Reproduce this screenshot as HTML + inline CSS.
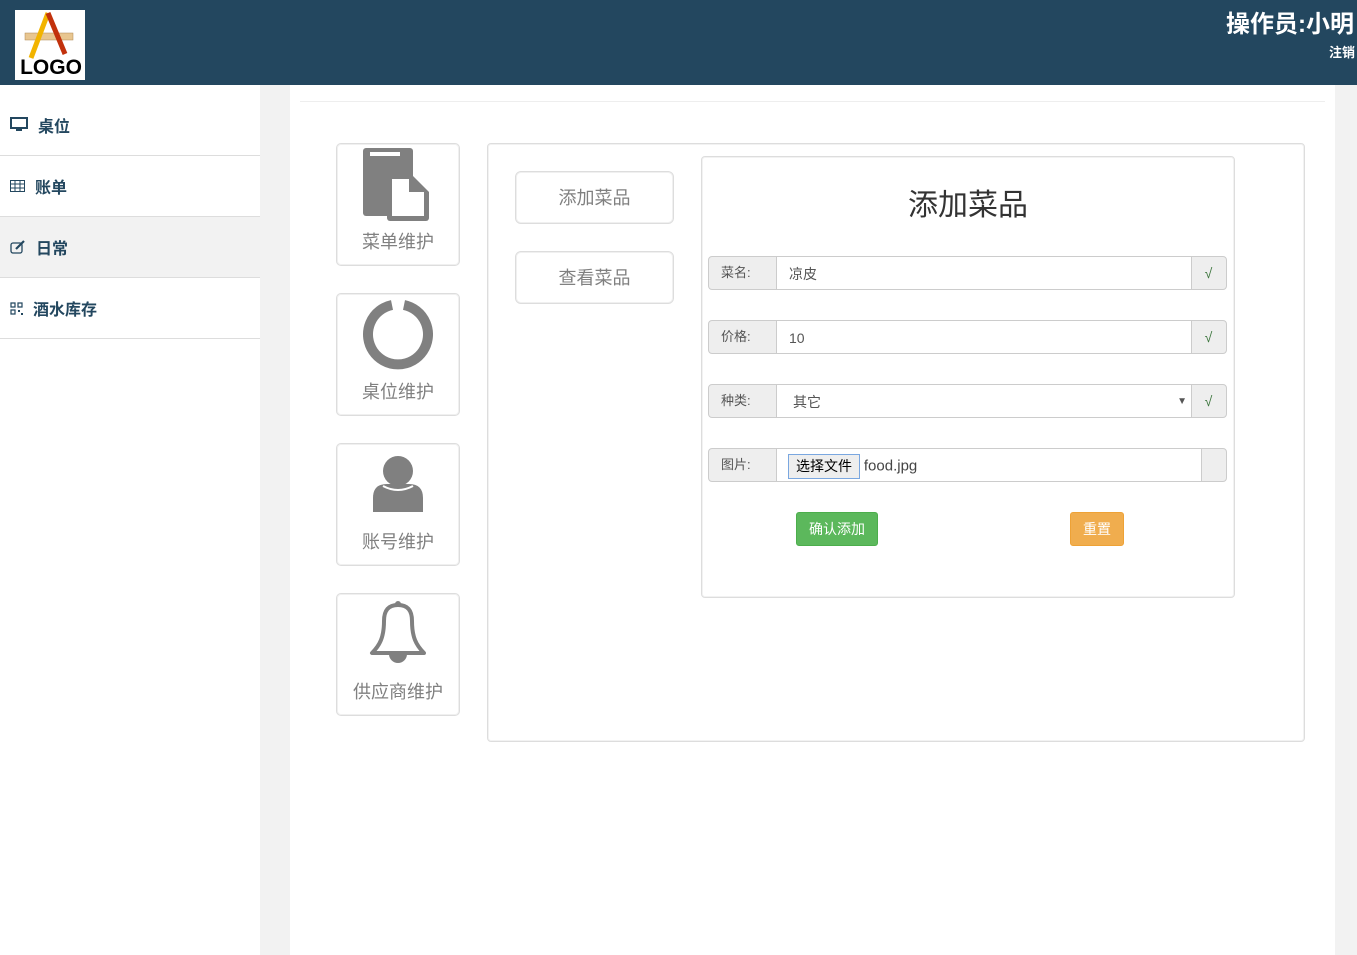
<!DOCTYPE html>
<html><head><meta charset="utf-8"><style>
*{margin:0;padding:0;box-sizing:border-box}
body{width:1357px;height:955px;overflow:hidden;background:#fff;font-family:"Liberation Sans","Noto Sans CJK SC",sans-serif;position:relative}
.hdr{position:absolute;left:0;top:0;width:1357px;height:85px;background:#23475f}
.logo{position:absolute;left:15px;top:10px;width:70px;height:70px;background:#fff}
.op{position:absolute;right:3px;top:4px;color:#fff;font-weight:bold;font-size:24px}
.lo{position:absolute;right:2px;top:42px;color:#fff;font-weight:bold;font-size:13px}
.side{position:absolute;left:0;top:85px;width:260px}
.it{height:61px;border-bottom:1px solid #ddd;display:flex;align-items:center;padding-left:10px;color:#23475f;font-size:16px;font-weight:bold}
.it svg{margin-right:10px}
.g1{position:absolute;left:260px;top:85px;width:30px;height:870px;background:#f2f2f2}
.g2{position:absolute;left:1335px;top:85px;width:22px;height:870px;background:#f2f2f2}
.hl{position:absolute;left:300px;top:101px;width:1025px;height:1px;background:#eee}
.tile{position:absolute;left:336px;width:124px;height:123px;border:1px solid #ddd;border-radius:5px;box-shadow:inset 0 0 0 1px #f0f0f0;text-align:center;color:#808080;font-size:18px}
.tile span{position:absolute;left:0;right:0;top:84px}
.tile svg{position:absolute;left:24px;top:2px}
.pan{position:absolute;border:1px solid #ddd;border-radius:4px;box-shadow:inset 0 0 0 1px #f2f2f2}
.btn{position:absolute;left:515px;width:159px;height:53px;border:1px solid #ddd;border-radius:6px;box-shadow:inset 0 0 0 1px #f0f0f0;color:#808080;font-size:18px;text-align:center;line-height:53px}
.row{position:absolute;left:708px;width:519px;height:34px;border:1px solid #ccc;border-radius:4px;background:#eee;font-size:13px;color:#555}
.row .l{position:absolute;left:0;top:0;width:67px;height:32px;line-height:32px;padding-left:12px}
.row .v{position:absolute;left:67px;top:0;width:416px;height:32px;background:#fff;border-left:1px solid #ccc;border-right:1px solid #ccc;line-height:34px;padding-left:12px;font-size:14px}
.row .c{position:absolute;right:0;top:0;width:35px;height:32px;line-height:32px;text-align:center;color:#3c763d;font-size:14px}
</style></head><body>
<div class="hdr">
<div class="logo"><svg width="70" height="70"><rect x="10" y="23" width="48" height="7" fill="#e8c690" stroke="#b08850" stroke-width="0.5"/><path d="M33 3 L16 48" stroke="#f2b400" stroke-width="5"/><path d="M33 3 L50 44" stroke="#c2310c" stroke-width="5"/><text x="36" y="64" text-anchor="middle" font-family="Liberation Sans" font-weight="bold" font-size="21" fill="#000">LOGO</text></svg></div>
<div class="op">操作员:小明</div><div class="lo">注销</div>
</div>
<div class="side">
<div class="it" style="height:71px;padding-top:9px"><svg width="18" height="15"><rect x="1" y="1" width="16" height="10" fill="none" stroke="#23475f" stroke-width="2"/><rect x="6" y="12" width="6" height="2" fill="#23475f"/></svg>桌位</div>
<div class="it"><svg width="15" height="12"><rect x="0.5" y="0.5" width="14" height="11" fill="none" stroke="#23475f"/><path d="M0 4H15M0 8H15M5 0V12M10 0V12" stroke="#23475f"/></svg>账单</div>
<div class="it" style="background:#f2f2f2"><svg width="16" height="14"><rect x="1" y="3" width="11" height="10" rx="2" fill="none" stroke="#23475f" stroke-width="1.3"/><path d="M6 9L14 1" stroke="#23475f" stroke-width="2.2"/></svg>日常</div>
<div class="it"><svg width="13" height="13"><path d="M1 1h4v4h-4zM8 1h4v4h-4zM1 8h4v4h-4z" fill="none" stroke="#23475f" stroke-width="1.2"/><rect x="8" y="8" width="2" height="2" fill="#23475f"/><rect x="11" y="11" width="2" height="2" fill="#23475f"/></svg>酒水库存</div>
</div>
<div class="g1"></div><div class="g2"></div><div class="hl"></div>
<div class="tile" style="top:143px"><svg width="72" height="76"><rect x="2" y="2" width="50" height="68" rx="3" fill="#808080"/><rect x="9" y="6" width="30" height="4" fill="#fff"/><path d="M26 28h24l18 18v26a3 3 0 0 1-3 3h-36a3 3 0 0 1-3-3z" fill="#808080"/><path d="M31 33h17v13h15v24h-32z" fill="#fff"/></svg><span>菜单维护</span></div>
<div class="tile" style="top:293px"><svg width="72" height="76"><path d="M31 9 A30 30 0 1 0 43 9" fill="none" stroke="#808080" stroke-width="10"/></svg><span>桌位维护</span></div>
<div class="tile" style="top:443px"><svg width="72" height="76"><circle cx="37" cy="25" r="15" fill="#808080"/><path d="M12 66 v-14 q0-14 14-14 h22 q14 0 14 14 v14 z" fill="#808080"/><path d="M22 40 q15 8 30 0" fill="none" stroke="#fff" stroke-width="2"/></svg><span>账号维护</span></div>
<div class="tile" style="top:593px"><svg width="72" height="76"><circle cx="37" cy="8" r="3" fill="#808080"/><path d="M37 9 c-10 0-14 6-14 16 c0 16-4 24-12 32 h52 c-8-8-12-16-12-32 c0-10-4-16-14-16z" fill="none" stroke="#808080" stroke-width="4" stroke-linejoin="round"/><path d="M28 58 a9 9 0 0 0 18 0z" fill="#808080"/></svg><span>供应商维护</span></div>
<div class="pan" style="left:487px;top:143px;width:818px;height:599px"></div>
<div class="btn" style="top:171px">添加菜品</div>
<div class="btn" style="top:251px">查看菜品</div>
<div class="pan" style="left:701px;top:156px;width:534px;height:442px"></div>
<div style="position:absolute;left:701px;top:180px;width:534px;text-align:center;font-size:30px;color:#333">添加菜品</div>
<div class="row" style="top:256px"><div class="l">菜名:</div><div class="v">凉皮</div><div class="c">√</div></div>
<div class="row" style="top:320px"><div class="l">价格:</div><div class="v">10</div><div class="c">√</div></div>
<div class="row" style="top:384px"><div class="l">种类:</div><div class="v" style="padding-left:16px">其它<span style="position:absolute;right:4px;font-size:10px">▼</span></div><div class="c">√</div></div>
<div class="row" style="top:448px"><div class="l">图片:</div><div class="v" style="width:426px;padding-left:11px;line-height:32px"><span style="display:inline-block;border:1px solid #7aa7e0;background:#eee;height:25px;line-height:23px;padding:0 7px;font-size:14px;color:#000;vertical-align:middle">选择文件</span> <span style="color:#444;font-size:15px;vertical-align:middle">food.jpg</span></div></div>
<div style="position:absolute;left:796px;top:512px;width:82px;height:34px;background:#5cb85c;border:1px solid #4cae4c;border-radius:3px;color:#fff;font-size:14px;text-align:center;line-height:32px">确认添加</div>
<div style="position:absolute;left:1070px;top:512px;width:54px;height:34px;background:#f0ad4e;border:1px solid #eea236;border-radius:3px;color:#fff;font-size:14px;text-align:center;line-height:32px">重置</div>
</body></html>
